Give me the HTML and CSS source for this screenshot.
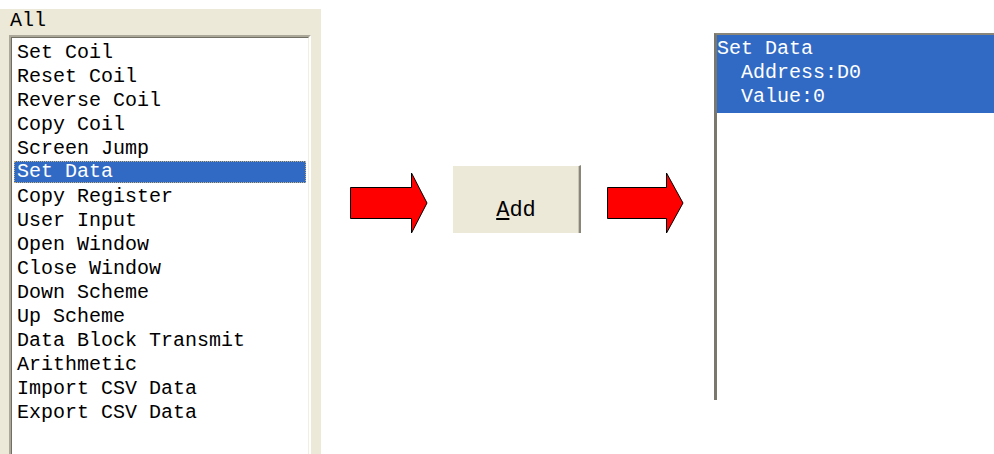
FILE: index.html
```html
<!DOCTYPE html>
<html lang="en">
<head>
    <meta charset="UTF-8">
    <meta name="viewport" content="width=device-width, initial-scale=1.0">
    <title>Add Command</title>
    <link rel="stylesheet" href="styles.css">
</head>
<body>
    <div class="panel">
        <div class="panel-label">All</div>
        <div class="listbox">
            <ul class="list-inner">
                <li>Set Coil</li>
                <li>Reset Coil</li>
                <li>Reverse Coil</li>
                <li>Copy Coil</li>
                <li>Screen Jump</li>
                <li class="selected">Set Data</li>
                <li>Copy Register</li>
                <li>User Input</li>
                <li>Open Window</li>
                <li>Close Window</li>
                <li>Down Scheme</li>
                <li>Up Scheme</li>
                <li>Data Block Transmit</li>
                <li>Arithmetic</li>
                <li>Import CSV Data</li>
                <li>Export CSV Data</li>
            </ul>
        </div>
    </div>

    <div class="middle">
        <svg class="arrow" width="78" height="62" viewBox="0 0 78 62">
            <polygon points="0.5,15.5 61.5,15.5 61.5,1 77,31 61.5,61 61.5,46.5 0.5,46.5" fill="#ff0000" stroke="#000" stroke-width="1"/>
        </svg>
        <button class="add-btn" type="button"><u>A</u>dd</button>
        <svg class="arrow" width="78" height="62" viewBox="0 0 78 62">
            <polygon points="0.5,15.5 59.5,15.5 59.5,1 76,31 59.5,61 59.5,46.5 0.5,46.5" fill="#ff0000" stroke="#000" stroke-width="1"/>
        </svg>
    </div>

    <div class="result">
        <div class="result-selected">
            <div class="result-line">Set Data</div>
            <div class="result-line sub">Address:D0</div>
            <div class="result-line sub">Value:0</div>
        </div>
    </div>
</body>
</html>
```

FILE: styles.css
```css
html, body {
    margin: 0;
    padding: 0;
}
body {
    width: 994px;
    height: 454px;
    overflow: hidden;
    background-color: #fff;
    display: flex;
    align-items: flex-start;
    font-family: "Liberation Mono", "DejaVu Sans Mono", monospace;
    font-size: 20px;
    color: #000;
}
.panel {
    flex: none;
    width: 312px;
    height: 445px;
    overflow: hidden;
    margin-top: 9px;
    padding-left: 9px;
    background-color: #ece9d8;
}
.panel-label {
    line-height: 20px;
    padding-top: 2px;
    padding-left: 1px;
}
.listbox {
    margin-top: 4px;
    width: 298px;
    height: 420px;
    border-style: solid;
    border-width: 2px 2px 0 2px;
    border-color: #aca899 #fff #fff #aca899;
}
.list-inner {
    list-style-type: none;
    margin: 0;
    padding: 3px 2px 0 2px;
    height: 100%;
    box-sizing: border-box;
    background-color: #fff;
    border-style: solid;
    border-width: 1px 1px 0 1px;
    border-color: #716f64 #f1efe2 #f1efe2 #716f64;
}
.list-inner li {
    line-height: 24px;
    height: 24px;
    padding-left: 3px;
    white-space: nowrap;
}
.list-inner li.selected {
    height: 22px;
    line-height: 22px;
    margin-bottom: 2px;
    background-color: #316ac5;
    color: #fff;
    outline: 1px dotted #c8b27a;
    outline-offset: -1px;
}
.middle {
    flex: none;
    display: flex;
    align-items: flex-start;
    margin-top: 165px;
    margin-left: 29px;
}
.arrow {
    display: block;
    margin-top: 7px;
}
.add-btn {
    width: 129px;
    height: 68px;
    margin-left: 24px;
    margin-right: 26px;
    padding: 22px 0 0 0;
    font-family: "Liberation Mono", "DejaVu Sans Mono", monospace;
    font-size: 22px;
    color: #000;
    background-color: #ece9d8;
    border-style: solid;
    border-width: 1px 2px 0 1px;
    border-color: #fff #8a877a #fff #fff;
    border-radius: 0;
    box-shadow: inset -1px 0 0 #c9c6b6;
}
.result {
    flex: none;
    width: 300px;
    height: 365px;
    margin-top: 33px;
    margin-left: 29px;
    border-style: solid;
    border-width: 2px 0 0 3px;
    border-color: #8a877a;
    border-left-color: #7a786c;
    background-color: #fff;
}
.result-selected {
    background-color: #316ac5;
    color: #fff;
    padding: 2px 0 4px 0;
}
.result-line {
    line-height: 24px;
    white-space: nowrap;
}
.result-line.sub {
    padding-left: 24px;
}
```
